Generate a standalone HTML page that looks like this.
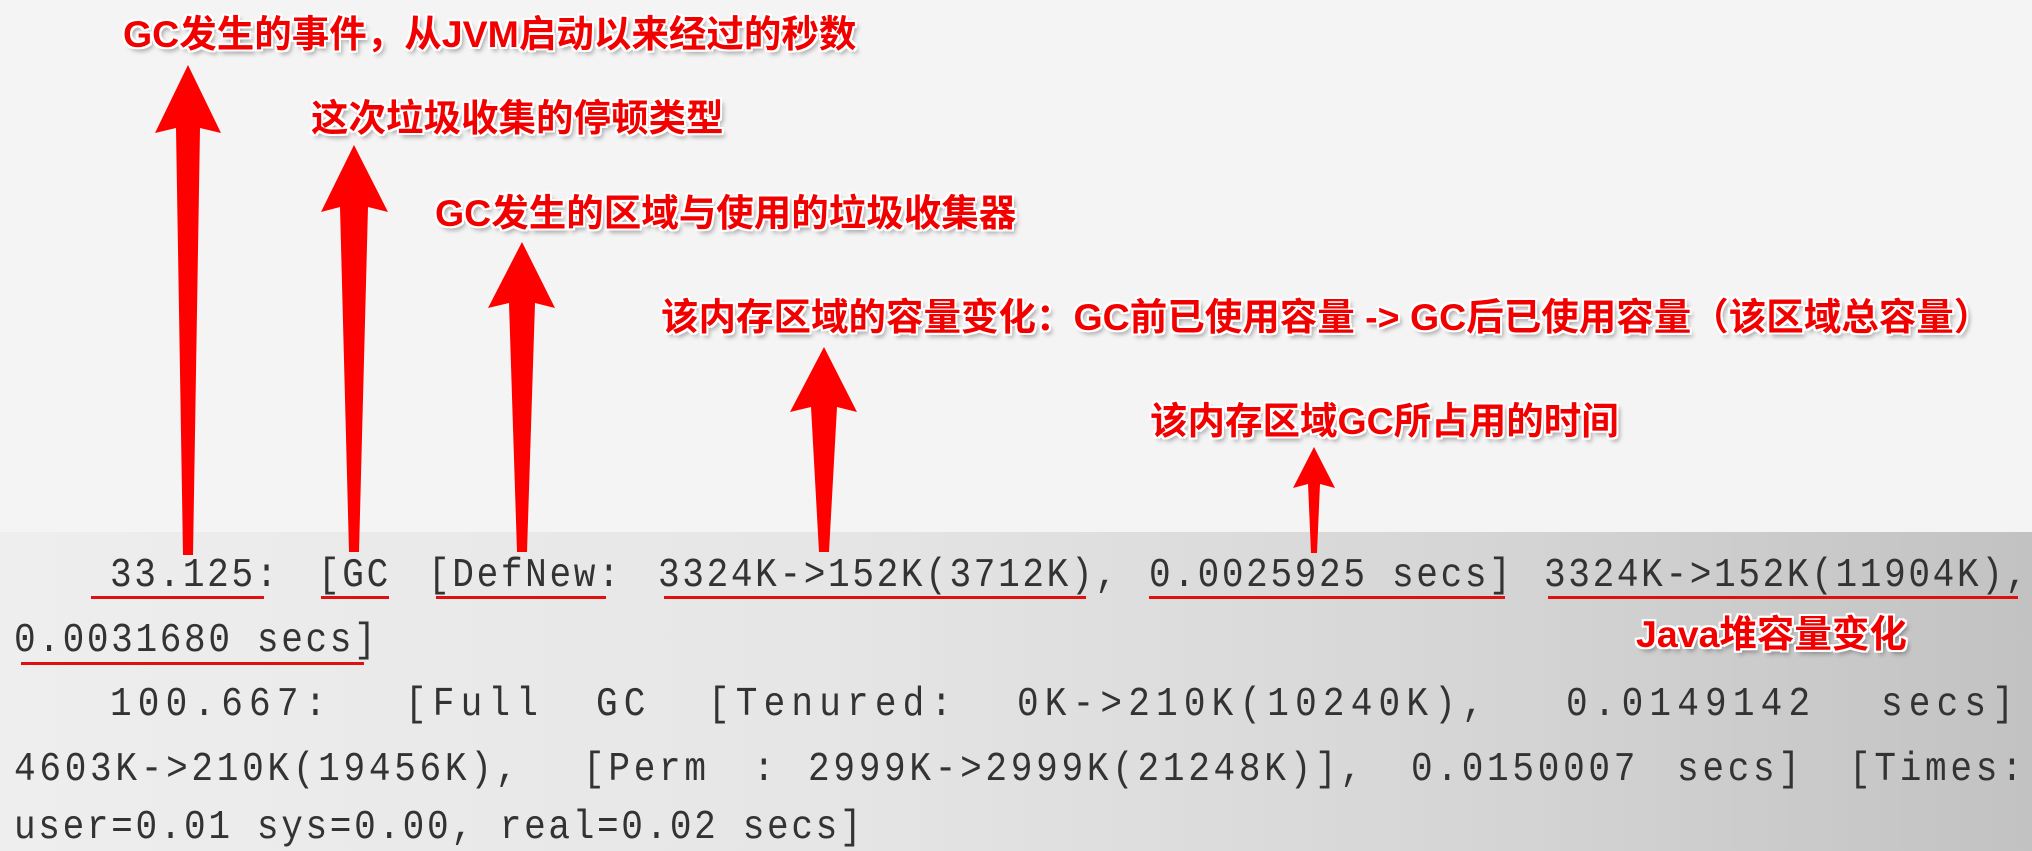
<!DOCTYPE html>
<html><head><meta charset="utf-8"><style>
html,body{margin:0;padding:0}
body{width:2032px;height:851px;position:relative;overflow:hidden;background:#f4f4f4;}
.bg{position:absolute;left:0;top:532px;width:2032px;height:319px;background:linear-gradient(90deg,#eeeeee 0%,#e6e6e6 40%,#d4d4d4 75%,#c2c2c2 100%);}
.t{position:absolute;font-family:"Liberation Sans","Noto Sans CJK SC",sans-serif;font-weight:bold;font-size:37.5px;color:#f20000;white-space:nowrap;line-height:1;
text-shadow:-2px 0 #fff,2px 0 #fff,0 -2px #fff,0 2px #fff,-2px -2px #fff,2px 2px #fff,-2px 2px #fff,2px -2px #fff,3px 4px 5px rgba(0,0,0,.35);}
.m{position:absolute;font-family:"Liberation Mono",monospace;font-size:41px;line-height:1;color:#333;white-space:pre;transform:scaleX(0.88);transform-origin:0 0;letter-spacing:3px;}
.w{letter-spacing:7px}
.v{letter-spacing:4.2px}
.u{position:absolute;height:3px;background:#e01010;}
svg{position:absolute;left:0;top:0}
</style></head><body>
<div class="bg"></div>
<svg width="2032" height="851">
<g fill="#ff0000">
<path d="M188 65 L221 133 L200 128 L193 555 L183 555 L176 128 L155 133 Z"/>
<path d="M354 145 L388 212 L368 207 L359 552 L349 552 L340 207 L321 212 Z"/>
<path d="M522 242 L555 308 L535 303 L527 552 L517 552 L509 303 L488 308 Z"/>
<path d="M824 347 L857 412 L837 407 L829 552 L819 552 L811 407 L790 412 Z"/>
<path d="M1314 447 L1335 488 L1320 484 L1317 553 L1311 553 L1308 484 L1293 488 Z"/>
</g>
</svg>
<div class="t" style="left:123px;top:16px">GC发生的事件，从JVM启动以来经过的秒数</div>
<div class="t" style="left:311px;top:100px">这次垃圾收集的停顿类型</div>
<div class="t" style="left:435px;top:195px">GC发生的区域与使用的垃圾收集器</div>
<div class="t" style="left:661px;top:299px">该内存区域的容量变化：GC前已使用容量 -&gt; GC后已使用容量（该区域总容量）</div>
<div class="t" style="left:1150px;top:403px">该内存区域GC所占用的时间</div>
<div class="t" style="left:1636px;top:616px">Java堆容量变化</div>

<div class="m" style="left:110px;top:556px">33.125:</div>
<div class="m" style="left:318px;top:556px">[GC</div>
<div class="m" style="left:428px;top:556px">[DefNew:</div>
<div class="m" style="left:658px;top:556px">3324K-&gt;152K(3712K),</div>
<div class="m" style="left:1149px;top:556px">0.0025925</div>
<div class="m" style="left:1392px;top:556px">secs]</div>
<div class="m" style="left:1544px;top:556px">3324K-&gt;152K(11904K),</div>
<div class="m" style="left:14px;top:621px">0.0031680 secs]</div>
<div class="m w" style="left:110px;top:685px">100.667:</div>
<div class="m w" style="left:405px;top:685px">[Full</div>
<div class="m w" style="left:596px;top:685px">GC</div>
<div class="m w" style="left:708px;top:685px">[Tenured:</div>
<div class="m w" style="left:1017px;top:685px">0K-&gt;210K(10240K),</div>
<div class="m w" style="left:1566px;top:685px">0.0149142</div>
<div class="m w" style="left:1881px;top:685px">secs]</div>
<div class="m v" style="left:14px;top:750px">4603K-&gt;210K(19456K),</div>
<div class="m v" style="left:583px;top:750px">[Perm</div>
<div class="m v" style="left:753px;top:750px">:</div>
<div class="m v" style="left:808px;top:750px">2999K-&gt;2999K(21248K)],</div>
<div class="m v" style="left:1411px;top:750px">0.0150007</div>
<div class="m v" style="left:1677px;top:750px">secs]</div>
<div class="m v" style="left:1849px;top:750px">[Times:</div>
<div class="m" style="left:14px;top:808px">user=0.01 sys=0.00, real=0.02 secs]</div>

<div class="u" style="left:91px;top:596px;width:173px"></div>
<div class="u" style="left:321px;top:596px;width:68px"></div>
<div class="u" style="left:436px;top:596px;width:170px"></div>
<div class="u" style="left:664px;top:596px;width:422px"></div>
<div class="u" style="left:1149px;top:596px;width:356px"></div>
<div class="u" style="left:1548px;top:596px;width:470px"></div>
<div class="u" style="left:21px;top:662px;width:343px"></div>
</body></html>
